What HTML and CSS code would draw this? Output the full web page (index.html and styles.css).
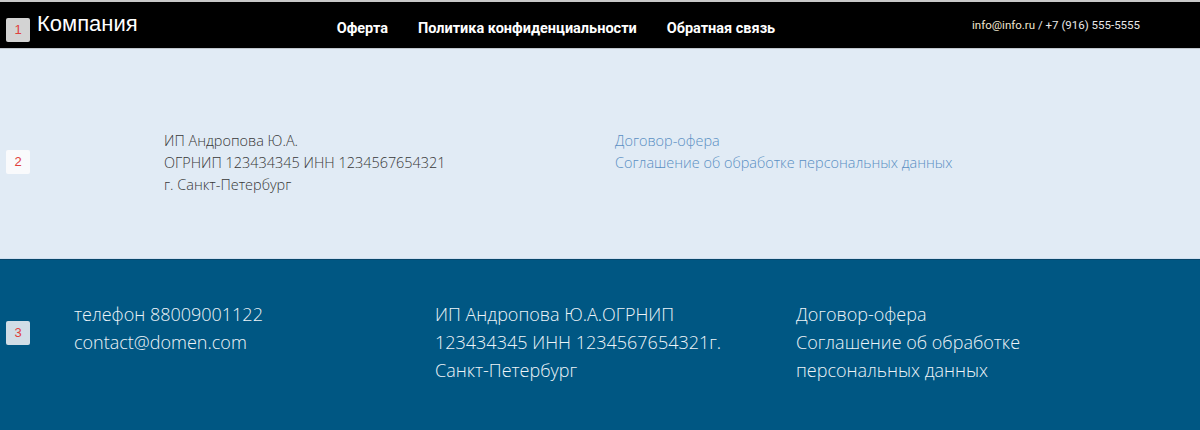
FILE: index.html
```html
<!DOCTYPE html>
<html lang="ru">
<head>
<meta charset="utf-8">
<title>Компания</title>
<link rel="stylesheet" href="styles.css">
</head>
<body>
<header class="topbar">
  <span class="badge badge-1">1</span>
  <div class="brand">Компания</div>
  <nav class="nav">
    <a class="nav-link" href="#">Оферта</a>
    <a class="nav-link" href="#">Политика конфиденциальности</a>
    <a class="nav-link" href="#">Обратная связь</a>
  </nav>
  <div class="contact"><span class="contact-mail">info@info.ru</span> / +7 (916) 555-5555</div>
</header>

<section class="info">
  <span class="badge badge-2">2</span>
  <div class="info-inner">
    <div class="info-col">
      <p>ИП Андропова Ю.А.</p>
      <p>ОГРНИП 123434345 ИНН 1234567654321</p>
      <p>г. Санкт-Петербург</p>
    </div>
    <div class="info-col">
      <p><a class="info-link" href="#">Договор-офера</a></p>
      <p><a class="info-link" href="#">Соглашение об обработке персональных данных</a></p>
    </div>
  </div>
</section>

<footer class="footer">
  <span class="badge badge-3">3</span>
  <div class="footer-inner">
    <div class="footer-col">
      <p>телефон 88009001122</p>
      <p>contact@domen.com</p>
    </div>
    <div class="footer-col">
      <p>ИП Андропова Ю.А.ОГРНИП 123434345 ИНН 1234567654321г. Санкт-Петербург</p>
    </div>
    <div class="footer-col">
      <p>Договор-офера</p>
      <p>Соглашение об обработке персональных данных</p>
    </div>
  </div>
</footer>
</body>
</html>
```

FILE: styles.css
```css
* { box-sizing: border-box; }
html, body { margin: 0; padding: 0; }
body {
  background: #005783;
  font-family: "Open Sans", "Liberation Sans", sans-serif;
  border-top: 2px solid #c9c9c9;
}
p { margin: 0; }
a { text-decoration: none; }

.badge {
  position: absolute;
  left: 6px;
  width: 24px;
  height: 24px;
  border-radius: 2px;
  background: #d3d3d3;
  color: #e0403c;
  font-family: "Liberation Sans", Arial, sans-serif;
  font-size: 13px;
  line-height: 24px;
  text-align: center;
}

.topbar {
  position: relative;
  height: 47px;
  background: #000;
  display: flex;
  align-items: center;
  padding: 0 60px 0 37px;
  border-bottom: 1px solid #bfc6cc;
}
.badge-1 { top: 16px; }
.brand {
  color: #fff;
  font-family: "Liberation Sans", Arial, sans-serif;
  font-size: 22px;
  margin-top: -3px;
}
.nav {
  display: flex;
  gap: 30px;
  margin-left: 199px;
  margin-top: 6px;
}
.nav-link {
  color: #fff;
  font-family: Roboto, "Liberation Sans", sans-serif;
  font-weight: 700;
  font-size: 14.5px;
}
.contact {
  margin-left: auto;
  color: #e8e8e8;
  font-family: Roboto, "Liberation Sans", sans-serif;
  font-size: 11.5px;
  margin-top: -1px;
}
.contact-mail { color: #f1e6cf; }

.info {
  position: relative;
  background: #e1ebf5;
  padding: 81px 0 62px;
  border-bottom: 1px solid #cfe0f1;
}
.badge-2 { top: 101px; background: #f9fafc; }
.info-inner {
  width: 902px;
  margin: 0 auto;
  display: flex;
}
.info-col {
  width: 451px;
  padding: 0 15px;
  color: #383838;
  font-size: 14.45px;
  font-weight: 300;
  line-height: 22px;
}
.info-link { color: #5a8fc3; }

.footer {
  position: relative;
  background: #005783;
  border-top: 1px solid #08466a;
  padding: 40px 0 40px;
}
.badge-3 { top: 61px; background: #d1dde6; }
.footer-inner {
  width: 1084px;
  margin: 0 0 0 58px;
  display: flex;
}
.footer-col {
  width: 361px;
  padding: 0 16px;
  color: #eef4f8;
  font-size: 18px;
  font-weight: 300;
  line-height: 28px;
}
```
